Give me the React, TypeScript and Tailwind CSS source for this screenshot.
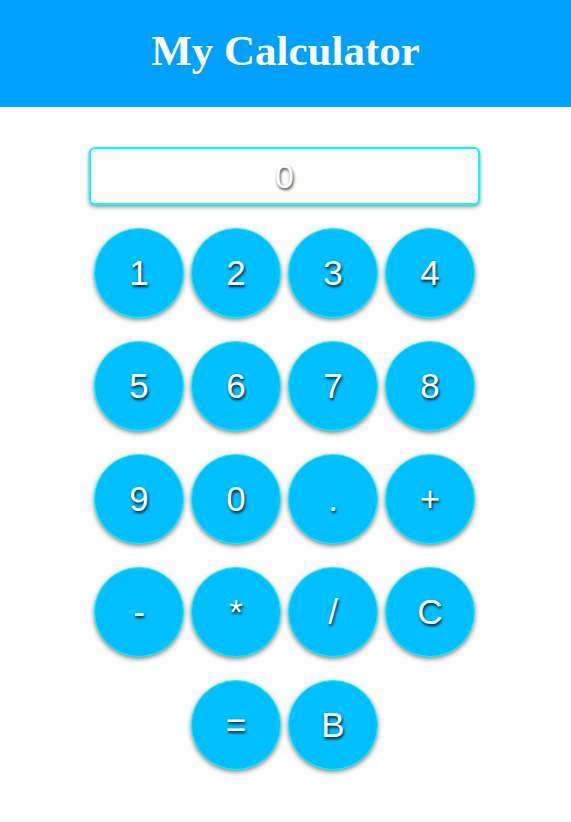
const keys = ['1', '2', '3', '4', '5', '6', '7', '8', '9', '0', '.', '+', '-', '*', '/', 'C', '=', 'B'];

export default function App() {
  return (
    <div className="min-h-screen bg-white" style={{ fontFamily: '"Liberation Sans", Arial, sans-serif' }}>
      <header className="h-[107px] bg-[#00a0ff] flex items-center justify-center pb-[6px]">
        <h1 className="text-white text-[43px] font-bold leading-none" style={{ fontFamily: '"Liberation Serif", "Times New Roman", serif' }}>
          My Calculator
        </h1>
      </header>

      <div className="w-[391px] ml-[89px] pt-[40px]">
        <div className="h-[58px] border-2 border-[#00ffff] rounded-[6px] bg-white shadow-[0_2px_4px_rgba(0,0,0,0.45)] flex items-center justify-center">
          <span className="text-white text-[34px] [text-shadow:1px_2px_3px_rgba(0,0,0,0.75)]">0</span>
        </div>

        <div className="mt-[23px] flex flex-wrap justify-center gap-x-[7px] gap-y-[23px]">
          {keys.map((k) => (
            <button
              key={k}
              className="w-[90px] h-[90px] rounded-full bg-[#00bfff] border border-[#00ffff] shadow-[0_2px_5px_rgba(0,0,0,0.5)] text-white text-[35px] flex items-center justify-center [text-shadow:1px_2px_3px_rgba(0,0,0,0.85)]"
            >
              {k}
            </button>
          ))}
        </div>
      </div>
    </div>
  );
}
